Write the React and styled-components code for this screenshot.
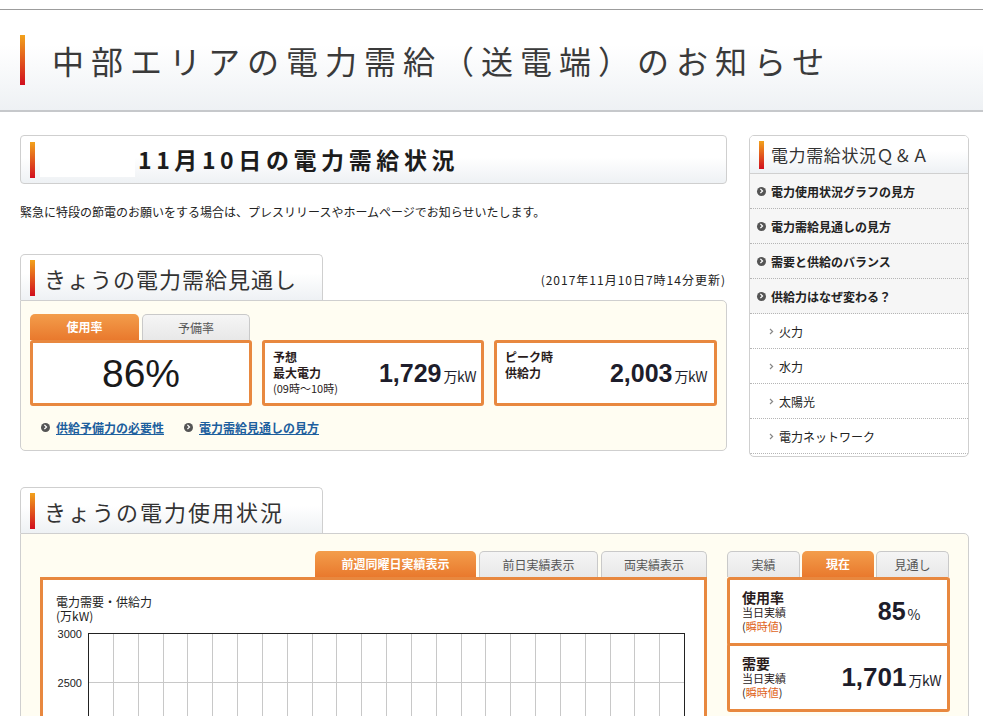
import React from 'react';
import styled, { createGlobalStyle } from 'styled-components';

const GlobalStyle = createGlobalStyle`
  html, body { margin: 0; padding: 0; background: #fff; }
  body {
    font-family: "Noto Sans CJK JP", "Noto Sans", sans-serif;
    color: #222;
    font-size: 12px;
  }
  * { box-sizing: border-box; }
`;

const ORANGE = '#e8883f';
const CREAM = '#fffdf2';

const Page = styled.div`
  padding-top: 9px;
`;

const Header = styled.header`
  height: 103px;
  border-top: 1px solid #9c9c9c;
  border-bottom: 2px solid #c6c8cb;
  background: linear-gradient(#ffffff 0%, #ffffff 35%, #eef1f4 100%);
  display: flex;
  align-items: center;
  padding-left: 20px;
`;

const Accent = styled.span`
  display: block;
  flex: none;
  width: 5px;
  height: ${p => p.$h}px;
  background: linear-gradient(#f2a21c, #d10e1e);
`;

const SiteTitle = styled.h1`
  margin: 0 0 0 27px;
  font-size: 32px;
  font-weight: 400;
  letter-spacing: 7px;
  color: #3a3a3a;
  line-height: 1;
`;

const Content = styled.div`
  padding: 23px 14px 0 20px;
`;

const TopGrid = styled.div`
  display: grid;
  grid-template-columns: 707px 220px;
  column-gap: 22px;
  align-items: start;
`;

const Main = styled.div`
  display: flex;
  flex-direction: column;
`;

const DateBox = styled.div`
  height: 49px;
  border: 1px solid #cfcfcf;
  border-radius: 4px;
  background: linear-gradient(#ffffff 0%, #ffffff 45%, #eef1f4 100%);
  display: flex;
  align-items: center;
  padding-left: 9px;
`;

const Blank = styled.span`
  flex: none;
  width: 95px;
  height: 35px;
  margin-left: 5px;
  background: #fff;
`;

const DateTitle = styled.h2`
  margin: 0 0 0 3px;
  font-size: 23px;
  font-weight: 700;
  letter-spacing: 4.6px;
  color: #1c1c1c;
  line-height: 1;
`;

const Notice = styled.p`
  margin: 19px 0 0;
  font-size: 12px;
  line-height: 18px;
  color: #222;
`;

const SectionHead = styled.div`
  margin-top: ${p => p.$mt || 0}px;
  display: flex;
  justify-content: space-between;
  align-items: flex-end;
`;

const SectionTab = styled.div`
  width: 303px;
  height: 46px;
  border: 1px solid #cfcfcf;
  border-bottom: none;
  border-radius: 5px 5px 0 0;
  background: linear-gradient(#ffffff 0%, #ffffff 40%, #eef1f4 100%);
  display: flex;
  align-items: center;
  padding: 0 0 0 9px;
`;

const SectionTitle = styled.h3`
  margin: 0 0 0 9px;
  font-size: 22px;
  font-weight: 400;
  letter-spacing: ${p => p.$ls || 1}px;
  color: #333;
  line-height: 1;
`;

const Updated = styled.span`
  font-size: 12px;
  letter-spacing: 1px;
  line-height: 18px;
  padding: 0 1px 11px 0;
  color: #222;
`;

const Panel = styled.div`
  border: 1px solid #cfcfcf;
  border-radius: 0 5px 5px 5px;
  background: ${CREAM};
  padding: ${p => p.$pad};
`;

const Cards = styled.div`
  display: grid;
  grid-template-columns: 222px 222px 223px;
  grid-template-rows: 26px 66px;
  column-gap: 10px;
`;

const TabRow = styled.div`
  display: flex;
  gap: ${p => p.$gap ?? 3}px;
  justify-content: ${p => (p.$end ? 'flex-end' : 'flex-start')};
  align-items: flex-end;
  grid-column: ${p => p.$col || 'auto'};
`;

const Tab = styled.div`
  width: ${p => p.$w}px;
  height: 26px;
  border-radius: 5px 5px 0 0;
  display: flex;
  align-items: center;
  justify-content: center;
  font-size: 12px;
  line-height: 1;
  ${p =>
    p.$active
      ? `
    background: linear-gradient(#f39d4b, #e9792d);
    color: #fff;
    font-weight: 700;
  `
      : `
    background: linear-gradient(#f5f5f5, #e8e8e8);
    border: 1px solid #c9c9c9;
    border-bottom: none;
    color: #555;
  `}
`;

const Card = styled.div`
  grid-row: 2;
  border: 3px solid ${ORANGE};
  border-radius: 3px;
  background: #fff;
  display: flex;
  align-items: center;
  justify-content: ${p => (p.$center ? 'center' : 'space-between')};
  padding: ${p => (p.$center ? '0' : `0 ${p.$pr || 5}px 0 8px`)};
`;

const Percent = styled.span`
  font-family: "Liberation Sans", Arial, sans-serif;
  font-size: 39px;
  color: #1a1a1a;
  margin-top: 2px;
`;

const Labels = styled.div`
  display: flex;
  flex-direction: column;
  align-self: ${p => (p.$top ? 'flex-start' : 'center')};
  margin-top: ${p => (p.$top ? 6 : 0)}px;
`;

const Label = styled.span`
  font-size: ${p => p.$size || 12}px;
  font-weight: ${p => (p.$bold ? 700 : 400)};
  line-height: ${p => p.$lh || 16}px;
  color: ${p => p.$color || '#2a1c1c'};
  white-space: nowrap;
`;

const Value = styled.span`
  font-family: "Liberation Sans", Arial, sans-serif;
  font-weight: 700;
  font-size: ${p => p.$size || 25}px;
  color: #1d1d2b;
  white-space: nowrap;
`;

const Unit = styled.span`
  font-family: "Noto Sans CJK JP", sans-serif;
  font-weight: 400;
  font-size: 14px;
  margin-left: 2px;
  letter-spacing: -0.5px;
`;

const Links = styled.div`
  margin-top: 12px;
  height: 18px;
  display: flex;
  align-items: center;
  gap: 20px;
  padding-left: 11px;
`;

const LinkItem = styled.a`
  display: inline-flex;
  align-items: center;
  gap: 6px;
  font-size: 12px;
  font-weight: 700;
  color: #1d5f9e;
  text-decoration: underline;
  cursor: pointer;
`;

const BulletDot = styled.span`
  flex: none;
  width: 9px;
  height: 9px;
  border-radius: 50%;
  background: #555;
  display: inline-flex;
  align-items: center;
  justify-content: center;
  svg { display: block; }
`;

const Bullet = () => (
  <BulletDot>
    <svg width="5" height="6" viewBox="0 0 5 6">
      <path d="M1.4 0.9 L3.5 3 L1.4 5.1" stroke="#fff" strokeWidth="1.3" fill="none" />
    </svg>
  </BulletDot>
);

const Sidebar = styled.aside`
  border: 1px solid #cfcfcf;
  border-radius: 5px;
  background: #fff;
  overflow: hidden;
  padding-bottom: 2px;
`;

const SideHead = styled.div`
  height: 38px;
  border-bottom: 1px solid #d0d0d0;
  background: linear-gradient(#ffffff 0%, #ffffff 40%, #eef1f4 100%);
  display: flex;
  align-items: center;
  padding-left: 9px;
`;

const SideTitle = styled.h3`
  margin: 0 0 0 7px;
  font-size: 17px;
  font-weight: 400;
  letter-spacing: 0.6px;
  color: #333;
  line-height: 1;
`;

const SideList = styled.ul`
  list-style: none;
  margin: 0;
  padding: 0;
`;

const SideItem = styled.li`
  height: 35px;
  border-bottom: 1px dotted #b5b5b5;
  display: flex;
  align-items: center;
  gap: 5px;
  padding-left: ${p => (p.$sub ? 19 : 7)}px;
  background: ${p => (p.$sub ? '#fff' : '#f6f6f6')};
  font-size: 12px;
  font-weight: ${p => (p.$sub ? 400 : 700)};
  color: #222;
`;

const Chevron = () => (
  <svg width="5" height="7" viewBox="0 0 5 7">
    <path d="M1 1 L3.6 3.5 L1 6" stroke="#888" strokeWidth="1.2" fill="none" />
  </svg>
);

const UsageBody = styled.div`
  display: grid;
  grid-template-columns: 667px 223px;
  column-gap: 20px;
  align-items: start;
`;

const Column = styled.div`
  display: flex;
  flex-direction: column;
`;

const ChartBox = styled.div`
  height: 420px;
  border: 3px solid ${ORANGE};
  border-radius: 0 0 3px 3px;
  background: #fff;
  padding-top: 15px;
`;

const ChartCaption = styled.div`
  padding-left: 13px;
  font-size: 12px;
  line-height: 14px;
  color: #222;
`;

const ChartSvg = styled.svg`
  display: block;
`;

const StatStack = styled.div`
  display: flex;
  flex-direction: column;
`;

const Stat = styled.div`
  height: 69px;
  border: 3px solid ${ORANGE};
  border-radius: 3px;
  background: #fff;
  margin-top: ${p => (p.$overlap ? -3 : 0)}px;
  display: flex;
  align-items: center;
  justify-content: space-between;
  padding: 0 ${p => p.$pr}px 0 12px;
`;

const Orange = styled.span`
  color: #e0641c;
`;

const Chart = () => {
  const left = 45;
  const right = 641;
  const top = 10;
  const step = 49;
  const cols = 24;
  const colW = (right - left) / cols;
  const bottom = top + step * 6;
  const vLines = [];
  for (let i = 1; i < cols; i++) {
    const x = Math.round(left + i * colW) + 0.5;
    vLines.push(<line key={'v' + i} x1={x} x2={x} y1={top} y2={bottom} stroke="#c8c8c8" strokeWidth="1" />);
  }
  const hLines = [];
  const labels = [];
  [3000, 2500, 2000, 1500, 1000, 500, 0].forEach((v, i) => {
    const y = top + i * step + 0.5;
    if (i > 0 && i < 6) hLines.push(<line key={'h' + i} x1={left} x2={right} y1={y} y2={y} stroke="#c8c8c8" strokeWidth="1" />);
    labels.push(
      <text key={'t' + i} x={left - 6} y={y + 4} textAnchor="end" fontSize="11" fontFamily="'Liberation Sans', Arial, sans-serif" fill="#222">
        {v}
      </text>
    );
  });
  return (
    <ChartSvg width="661" height="330" viewBox="0 0 661 330">
      {vLines}
      {hLines}
      <rect x={left + 0.5} y={top + 0.5} width={right - left} height={bottom - top} fill="none" stroke="#222" strokeWidth="1" />
      {labels}
    </ChartSvg>
  );
};

export default function App() {
  return (
    <>
      <GlobalStyle />
      <Page>
        <Header>
          <Accent $h={50} />
          <SiteTitle>中部エリアの電力需給（送電端）のお知らせ</SiteTitle>
        </Header>
        <Content>
          <TopGrid>
            <Main>
              <DateBox>
                <Accent $h={36} />
                <Blank />
                <DateTitle>11月10日の電力需給状況</DateTitle>
              </DateBox>
              <Notice>緊急に特段の節電のお願いをする場合は、プレスリリースやホームページでお知らせいたします。</Notice>
              <SectionHead $mt={33}>
                <SectionTab>
                  <Accent $h={36} />
                  <SectionTitle>きょうの電力需給見通し</SectionTitle>
                </SectionTab>
                <Updated>(2017年11月10日7時14分更新)</Updated>
              </SectionHead>
              <Panel $pad="13px 9px 14px 9px">
                <Cards>
                  <TabRow $col="1">
                    <Tab $w={109} $active>使用率</Tab>
                    <Tab $w={108}>予備率</Tab>
                  </TabRow>
                  <Card $center>
                    <Percent>86%</Percent>
                  </Card>
                  <Card $pr={5}>
                    <Labels $top>
                      <Label $bold>予想</Label>
                      <Label $bold>最大電力</Label>
                      <Label $size={11} $lh={14}>(09時〜10時)</Label>
                    </Labels>
                    <Value>
                      1,729<Unit>万kW</Unit>
                    </Value>
                  </Card>
                  <Card $pr={7}>
                    <Labels $top>
                      <Label $bold>ピーク時</Label>
                      <Label $bold>供給力</Label>
                    </Labels>
                    <Value>
                      2,003<Unit>万kW</Unit>
                    </Value>
                  </Card>
                </Cards>
                <Links>
                  <LinkItem>
                    <Bullet />
                    供給予備力の必要性
                  </LinkItem>
                  <LinkItem>
                    <Bullet />
                    電力需給見通しの見方
                  </LinkItem>
                </Links>
              </Panel>
            </Main>
            <Sidebar>
              <SideHead>
                <Accent $h={28} />
                <SideTitle>電力需給状況Ｑ＆Ａ</SideTitle>
              </SideHead>
              <SideList>
                {['電力使用状況グラフの見方', '電力需給見通しの見方', '需要と供給のバランス', '供給力はなぜ変わる？'].map(t => (
                  <SideItem key={t}>
                    <Bullet />
                    {t}
                  </SideItem>
                ))}
                {['火力', '水力', '太陽光', '電力ネットワーク'].map(t => (
                  <SideItem key={t} $sub>
                    <Chevron />
                    {t}
                  </SideItem>
                ))}
              </SideList>
            </Sidebar>
          </TopGrid>

          <SectionHead $mt={30}>
            <SectionTab>
              <Accent $h={36} />
              <SectionTitle $ls={2}>きょうの電力使用状況</SectionTitle>
            </SectionTab>
          </SectionHead>
          <Panel $pad="17px 18px 0 19px">
            <UsageBody>
              <Column>
                <TabRow $end>
                  <Tab $w={161} $active>前週同曜日実績表示</Tab>
                  <Tab $w={119}>前日実績表示</Tab>
                  <Tab $w={106}>両実績表示</Tab>
                </TabRow>
                <ChartBox>
                  <ChartCaption>
                    電力需要・供給力
                    <br />
                    (万kW)
                  </ChartCaption>
                  <Chart />
                </ChartBox>
              </Column>
              <Column>
                <TabRow $gap={2}>
                  <Tab $w={73}>実績</Tab>
                  <Tab $w={72} $active>現在</Tab>
                  <Tab $w={73}>見通し</Tab>
                </TabRow>
                <StatStack>
                  <Stat $pr={27}>
                    <Labels>
                      <Label $bold $size={14} $lh={15}>使用率</Label>
                      <Label $size={11} $lh={14}>当日実績</Label>
                      <Label $size={11} $lh={14}>(<Orange>瞬時値</Orange>)</Label>
                    </Labels>
                    <Value $size={25}>
                      85<Unit>%</Unit>
                    </Value>
                  </Stat>
                  <Stat $pr={6} $overlap>
                    <Labels>
                      <Label $bold $size={14} $lh={15}>需要</Label>
                      <Label $size={11} $lh={14}>当日実績</Label>
                      <Label $size={11} $lh={14}>(<Orange>瞬時値</Orange>)</Label>
                    </Labels>
                    <Value $size={26}>
                      1,701<Unit>万kW</Unit>
                    </Value>
                  </Stat>
                </StatStack>
              </Column>
            </UsageBody>
          </Panel>
        </Content>
      </Page>
    </>
  );
}
